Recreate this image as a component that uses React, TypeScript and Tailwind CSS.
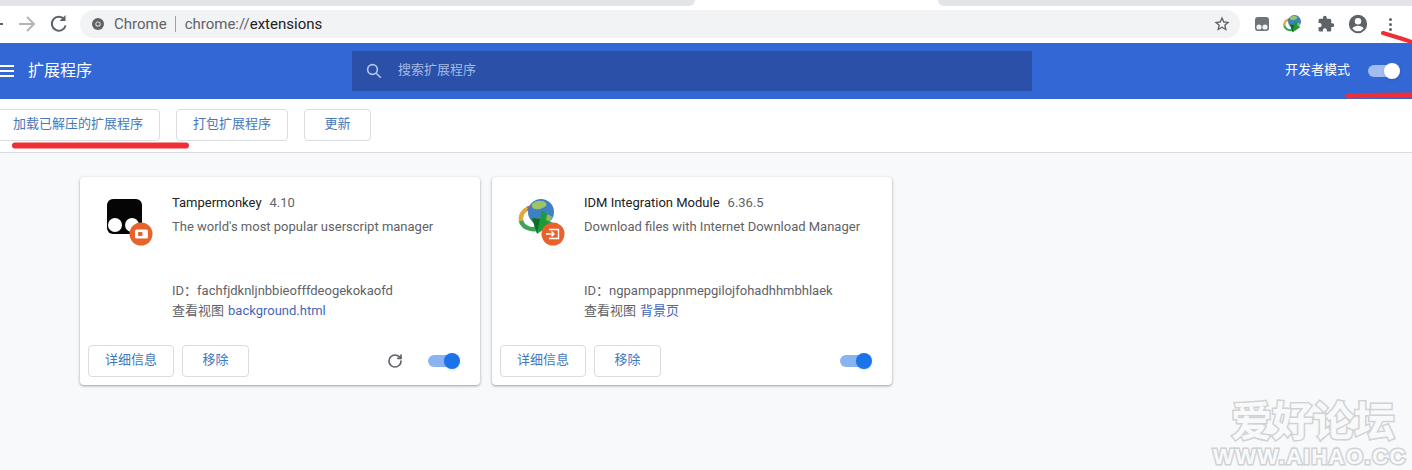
import { RotateCw } from 'lucide-react';

const cjk = "font-['Roboto','Noto_Sans_CJK_SC',sans-serif]";

function Toggle({ knob, track, className }: { knob: string; track: string; className?: string }) {
  return (
    <div className={`relative h-[18px] w-[32px] ${className ?? ''}`}>
      <div className={`absolute left-0 top-[3px] h-[12px] w-[28px] rounded-full ${track}`} />
      <div className={`absolute right-0 top-[1px] h-[16px] w-[16px] rounded-full shadow ${knob}`} />
    </div>
  );
}

function OutlineButton({ label, className }: { label: string; className: string }) {
  return (
    <button className={`flex h-[32px] items-center justify-center rounded-[4px] border border-[#dadce0] bg-white pb-[2px] text-[13px] text-[#4477bb] ${className}`}>
      {label}
    </button>
  );
}

function TamperIcon() {
  return (
    <svg width="52" height="52" viewBox="0 0 52 52">
      <rect x="3" y="2" width="35" height="35" rx="6" fill="#050505" />
      <circle cx="11" cy="28" r="7" fill="#fff" />
      <circle cx="28" cy="28" r="7" fill="#fff" />
      <circle cx="37" cy="37" r="11.5" fill="#e8622c" />
      <rect x="31" y="32.5" width="13" height="9" rx="1.5" fill="#fff" />
      <rect x="34" y="35" width="4.5" height="4" rx="1" fill="#e8622c" />
    </svg>
  );
}

function IdmArt() {
  return (
    <>
      <ellipse cx="14" cy="22" rx="10" ry="9.500" fill="none" stroke="#7b5fb0" strokeWidth="2" />
      <path d="M5 24a10 11 0 0 1 6-12" fill="none" stroke="#e0a83a" strokeWidth="4.500" />
      <path d="M11 11c2-1 4-1 6-1" fill="none" stroke="#d5523f" strokeWidth="3" />
      <path d="M5 24c2 6 8 9 15 8" fill="none" stroke="#3aa655" strokeWidth="4.500" />
      <circle cx="25" cy="15" r="13" fill="#3f7fc4" />
      <path d="M16 7c4-4 11-4 14-1 2 3-3 5-6 6-4 1-9 0-8-5z" fill="#9cc468" />
      <path d="M28 18c3-1 7 0 8 2-1 4-4 6-7 6-2-2-2-6-1-8z" fill="#8fb765" />
      <path d="M16 21l8 1 2-8 5 3-1 6 7 3-16 11z" fill="#1f9a3a" />
      <path d="M16 21l8 1-3 14z" fill="#0f6d28" />
    </>
  );
}

function IdmIcon() {
  return (
    <svg width="52" height="52" viewBox="0 0 52 52">
      <IdmArt />
      <circle cx="37" cy="37" r="11.5" fill="#e8622c" />
      <path d="M33 32.500h9.500v9H33M30 37h8M35.500 34.500L38 37l-2.500 2.500" fill="none" stroke="#fff" strokeWidth="1.400" />
    </svg>
  );
}

function ExtensionCard({
  icon, name, version, desc, id, link, reload,
}: {
  icon: React.ReactNode; name: string; version: string; desc: string; id: string; link: string; reload?: boolean;
}) {
  return (
    <div className="flex h-[208px] w-[400px] flex-col rounded-[4px] bg-white shadow-[0_1px_2px_rgba(60,64,67,0.35),0_1px_3px_1px_rgba(60,64,67,0.12)]">
      <div className="flex h-[160px] pl-[24px] pt-[16px]">
        <div className="mt-[4px] w-[68px] shrink-0">{icon}</div>
        <div className="flex flex-col text-[13px] text-[#5f6368]">
          <div className="flex h-[20px] items-center leading-[20px]">
            <span className="text-[#202124]">{name}</span>
            <span className="ml-[8px]">{version}</span>
          </div>
          <div className="mt-[4px] h-[20px] leading-[20px]">{desc}</div>
          <div className="mt-[44px] h-[20px] leading-[20px]">ID：{id}</div>
          <div className="h-[20px] leading-[20px]">
            查看视图<span className="ml-[4px] text-[#4268b8]">{link}</span>
          </div>
        </div>
      </div>
      <div className="flex items-center pl-[8px] pr-[20px] pt-[8px]">
        <OutlineButton label="详细信息" className="w-[86px]" />
        <OutlineButton label="移除" className="ml-[8px] w-[67px]" />
        <div className="ml-auto flex items-center">
          {reload && <RotateCw size={16} strokeWidth={2.5} className="mr-[25px] text-[#5f6368]" />}
          <Toggle knob="bg-[#1a73e8]" track="bg-[#8ab4f0]" />
        </div>
      </div>
    </div>
  );
}

export default function App() {
  return (
    <div className={`relative h-[470px] w-[1412px] overflow-hidden bg-[#f8f9fa] ${cjk}`}>
      {/* tab strip */}
      <div className="flex h-[10px] bg-white">
        <div className="h-[6px] w-[695px] rounded-br-[8px] bg-[#e2e4e7]" />
        <div className="w-[243px] bg-white" />
        <div className="h-[6px] flex-1 rounded-bl-[8px] bg-[#e2e4e7]" />
      </div>

      {/* browser toolbar */}
      <div className="flex h-[33px] items-start bg-white">
        <svg width="78" height="28" viewBox="0 0 78 28" className="shrink-0 text-[#5f6368]">
          <path d="M-8 14h11" stroke="#5f6368" strokeWidth="2" fill="none" />
          <path d="M19 14h14M27 7l7 7-7 7" stroke="#b1b4b8" strokeWidth="2" fill="none" />
          <path d="M64.200 9.200a7 7 0 1 0 1.400 6.300" stroke="currentColor" strokeWidth="2" fill="none" />
          <path d="M65.500 5v6h-6z" fill="currentColor" />
        </svg>
        <div className="ml-[2px] flex h-[28px] w-[1160px] items-center rounded-full bg-[#f1f3f4] pl-[12px] text-[15px]">
          <svg width="12" height="12" viewBox="0 0 12 12" className="ml-[0px]">
            <circle cx="6" cy="6" r="6" fill="#5f6368" />
            <circle cx="6" cy="6" r="2.600" fill="#f1f3f4" />
            <circle cx="6" cy="6" r="1.800" fill="#5f6368" />
          </svg>
          <span className="ml-[10px] text-[#5f6368]">Chrome</span>
          <span className="ml-[8px] h-[16px] w-px bg-[#9aa0a6]" />
          <span className="ml-[9px]"><span className="text-[#5f6368]">chrome://</span><span className="text-[#202124]">extensions</span></span>
          <svg width="16" height="16" viewBox="0 0 24 24" className="ml-auto mr-[10px]" fill="none" stroke="#5f6368" strokeWidth="2">
            <path d="M12 3l2.700 6 6.300.6-4.800 4.200 1.500 6.400L12 16.800 6.300 20.200l1.500-6.400L3 9.600l6.300-.6z" />
          </svg>
        </div>
        <div className="flex h-[28px] flex-1 items-center">
          <svg width="16" height="16" viewBox="0 0 16 16" className="ml-[14px]">
            <path d="M4 1h8a3 3 0 0 1 3 3v8a3 3 0 0 1-3 3H4a3 3 0 0 1-3-3V4a3 3 0 0 1 3-3z" fill="#6f7276" />
            <circle cx="5" cy="11" r="2.600" fill="#f1f3f4" />
            <circle cx="11" cy="11" r="2.600" fill="#f1f3f4" />
          </svg>
          <svg width="20" height="20" viewBox="0 0 40 40" className="ml-[12px]"><IdmArt /></svg>
          <svg width="18" height="18" viewBox="0 0 24 24" fill="#5f6368" className="ml-[15px]">
            <path d="M20.500 11H19V7a2 2 0 0 0-2-2h-4V3.500a2.500 2.500 0 0 0-5 0V5H4a2 2 0 0 0-2 2v3.800h1.500a2.700 2.700 0 0 1 0 5.400H2V20a2 2 0 0 0 2 2h3.800v-1.500a2.700 2.700 0 0 1 5.400 0V22H17a2 2 0 0 0 2-2v-4h1.500a2.500 2.500 0 0 0 0-5z" />
          </svg>
          <svg width="22" height="22" viewBox="0 0 24 24" fill="#5f6368" className="ml-[12px]">
            <path d="M12 2a10 10 0 1 0 0 20 10 10 0 0 0 0-20zm0 3.500a3.500 3.500 0 1 1 0 7 3.500 3.500 0 0 1 0-7zm0 14.300a8 8 0 0 1-6.200-3c.9-1.800 3.900-2.800 6.200-2.800s5.300 1 6.200 2.800a8 8 0 0 1-6.200 3z" />
          </svg>
          <span className="ml-[20px] flex flex-col gap-[2px]">
            <span className="h-[3px] w-[3px] rounded-full bg-[#5f6368]" />
            <span className="h-[3px] w-[3px] rounded-full bg-[#5f6368]" />
            <span className="h-[3px] w-[3px] rounded-full bg-[#5f6368]" />
          </span>
        </div>
      </div>

      {/* extensions header */}
      <div className="flex h-[56px] items-center bg-[#3367d6] text-white">
        <div className="flex w-[14px] flex-col gap-[3px]">
          <span className="h-[2px] bg-white" />
          <span className="h-[2px] bg-white" />
          <span className="h-[2px] bg-white" />
        </div>
        <span className="ml-[14px] w-[324px] text-[16px]">扩展程序</span>
        <div className="flex h-[40px] w-[680px] items-center bg-[#2a50a8] pl-[13px]">
          <svg width="18" height="18" viewBox="0 0 24 24" fill="none" stroke="#b4c6ee" strokeWidth="2.200">
            <circle cx="10" cy="10" r="6.500" /><path d="M15 15l6 6" />
          </svg>
          <span className="mb-[2px] ml-[15px] text-[13px] text-[#a5b9e6]">搜索扩展程序</span>
        </div>
        <span className="mb-[2px] ml-[253px] text-[13px]">开发者模式</span>
        <Toggle className="ml-[18px]" knob="bg-white" track="bg-[#a3bcf0]" />
      </div>

      {/* actions */}
      <div className="flex h-[54px] items-center gap-[16px] border-b border-[#dadce0] bg-white pb-[2px]">
        <OutlineButton label="加载已解压的扩展程序" className="-ml-[12px] w-[172px] pl-[8px]" />
        <OutlineButton label="打包扩展程序" className="w-[112px]" />
        <OutlineButton label="更新" className="w-[67px]" />
      </div>

      {/* cards */}
      <div className="flex gap-[12px] pl-[80px] pt-[24px]">
        <ExtensionCard
          icon={<TamperIcon />}
          name="Tampermonkey"
          version="4.10"
          desc="The world's most popular userscript manager"
          id="fachfjdknljnbbieofffdeogekokaofd"
          link="background.html"
          reload
        />
        <ExtensionCard
          icon={<IdmIcon />}
          name="IDM Integration Module"
          version="6.36.5"
          desc="Download files with Internet Download Manager"
          id="ngpampappnmepgilojfohadhhmbhlaek"
          link="背景页"
        />
      </div>

      {/* red annotation marks drawn on the screenshot */}
      <svg width="1412" height="470" className="pointer-events-none absolute left-0 top-0">
        <path d="M15 145.500h171" stroke="#ee2f35" strokeWidth="6" strokeLinecap="round" fill="none" />
        <path d="M1348 96c20-1 44-1 64-1" stroke="#ee2f35" strokeWidth="5" strokeLinecap="round" fill="none" />
        <path d="M1383 33c10 3 20 6 29 9" stroke="#ee2f35" strokeWidth="4" strokeLinecap="round" fill="none" />
      </svg>

      {/* forum watermark */}
      <div className="pointer-events-none absolute left-[1215px] top-[397px] flex w-[190px] flex-col items-center text-[#f8f9fa] [-webkit-text-stroke:3px_#d0d2d4] [paint-order:stroke_fill]">
        <span className="ml-[6px] text-[41px] font-bold leading-[50px]">爱好论坛</span>
        <span className="font-['Liberation_Sans',sans-serif] text-[22px] font-bold leading-[20px] tracking-[1.500px]">WWW.AIHAO.CC</span>
      </div>
    </div>
  );
}
